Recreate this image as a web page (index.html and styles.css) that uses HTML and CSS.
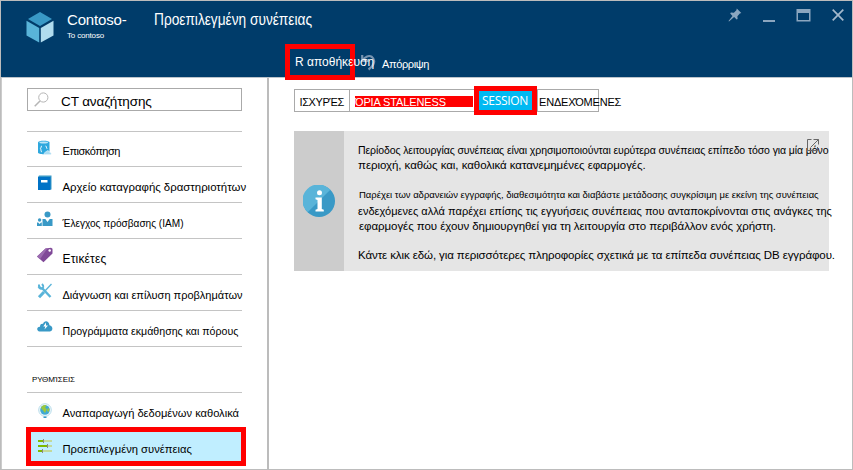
FILE: index.html
```html
<!DOCTYPE html>
<html lang="el">
<head>
<meta charset="utf-8">
<title>Προεπιλεγμένη συνέπειας</title>
<link rel="stylesheet" href="styles.css">
</head>
<body>
<div class="window">
  <header class="header">
    <div class="titlebar">
      <svg class="logo" width="28" height="31" viewBox="0 0 28 31">
        <path fill="#3999c6" d="M14 0 26 7 14 14 2 7z"/>
        <path fill="#59b4d9" d="M.5 8.8 13.2 16v14.5L.5 23.4z"/>
        <path fill="#b0dcee" d="M27.5 8.8 14.8 16v14.5l12.7-7.1z"/>
      </svg>
      <div class="brand">
        <div class="brand-name">Contoso-</div>
        <div class="brand-sub">Το contoso</div>
      </div>
      <h1 class="title">Προεπιλεγμένη συνέπειας</h1>
      <div class="controls">
        <svg width="14" height="14" viewBox="0 0 14 14" fill="#8ba6bf"><path d="M8.8.6 13.3 5l-1.5.5-2.4 2.7.2 2.7-1 .7-2.5-2.5L1 13.4.5 13l4-5L2.2 5.500l.7-.9 3 .2 2.500-2.500z"/></svg>
        <svg width="12" height="14" viewBox="0 0 12 14"><path fill="#8ba6bf" d="M0 12h12v2H0z"/></svg>
        <svg width="15" height="14" viewBox="0 0 15 14"><path fill="#8ba6bf" fill-rule="evenodd" d="M.5 1h14v12.500H.5zM2 5h11v7H2z"/></svg>
        <svg width="12" height="14" viewBox="0 0 12 14"><path stroke="#a5b9cc" stroke-width="1.700" d="M.7 1.700 11.300 12.300M11.300 1.700.7 12.300"/></svg>
      </div>
    </div>
    <div class="toolbar">
      <div class="save">R αποθήκευση</div>
      <svg class="undo" width="15" height="17" viewBox="0 0 15 17" fill="none" stroke="#7895b1" stroke-width="2.200"><path d="M1.200 1v6h6.300M1.500 6.500C4 2.500 8 .8 11 3c3.800 3 2.500 8-3.500 12.500"/></svg>
      <div class="discard">Απόρριψη</div>
    </div>
  </header>
  <div class="body">
    <nav class="sidebar">
      <div class="search">
        <svg width="15" height="15" viewBox="0 0 15 15" fill="none" stroke="#b5b5b5"><circle cx="9.300" cy="5.500" r="4.600"/><path stroke-width="1.500" d="M6 9 .7 14.300"/></svg>
        <span>CT αναζήτησης</span>
      </div>
      <ul class="menu">
        <li>
          <svg width="16" height="16" viewBox="0 0 16 16"><path fill="#2ea8de" d="M1 2.500C1 .3 12.500.3 12.500 2.500v10c0 2.300-11.500 2.300-11.500 0z"/><ellipse cx="6.700" cy="2.600" rx="4.300" ry="1" fill="#bfe6f7"/><path d="M5 6c-1.500 0-.5 2.300-1.700 2.800C4.500 9.300 3.500 12 5 12M8.500 6c1.500 0 .5 2.300 1.700 2.800" fill="none" stroke="#fff"/><path fill="#a9dbf2" stroke="#fff" stroke-width=".6" d="M7.500 14.700c-1-2 1-2.700 1.500-2.500.5-2 3-2 3.500 0 2-.2 2.500 2.500.8 2.500z"/></svg>
          <span class="overview">Επισκόπηση</span>
        </li>
        <li>
          <svg width="16" height="16" viewBox="0 0 16 16"><path fill="#3999c6" d="M2 .5h12.500v14H13V2H1z"/><path fill="#0072c6" d="M1 2h12.500v13H1z"/><path fill="#fff" d="M4 5h6.500v2.500H4z"/></svg>
          <span class="log">Αρχείο καταγραφής δραστηριοτήτων</span>
        </li>
        <li>
          <svg width="16" height="16" viewBox="0 0 16 16" fill="#3999c6"><circle cx="10.500" cy="3.500" r="3"/><path d="M5.500 15V8h2.800l2.200 3 2.200-3h2.800v7z"/><circle cx="2.600" cy="9" r="1.700"/><path d="M0 15v-3.500h1.200l1.400 1.500L4 11.500h.8V15z"/></svg>
          <span class="iam">Έλεγχος πρόσβασης (IAM)</span>
        </li>
        <li>
          <svg width="16" height="16" viewBox="0 0 16 16"><path fill="#804998" d="M8.500 1.500 14 .7l1.500 1v4.800L6.500 15.300 0 9.500z"/><path fill="#9b6bb0" d="m8.500 1.500 2-.3L3 12.200 0 9.500z"/><circle cx="12.700" cy="3.500" r="1.200" fill="#fff"/></svg>
          <span class="tags">Ετικέτες</span>
        </li>
        <li>
          <svg width="16" height="16" viewBox="0 0 16 16" fill="none" stroke="#59b4d9"><path stroke-width="2.400" d="m5 5 8.500 9"/><path stroke-width="2" d="M2 1.500c-.5 4 3.500 4.500 4.200 2.500C6.500 2.500 5.500 1.500 5 1M1.500 3.500C3 6.500 5 6 6 5"/><path stroke-width="1.300" d="M14.500 1 7 9"/><path stroke-width="3" d="m7 9-5 5.300"/></svg>
          <span class="diagnose">Διάγνωση και επίλυση προβλημάτων</span>
        </li>
        <li>
          <svg width="16" height="16" viewBox="0 0 16 16"><path fill="#3999c6" d="M2.500 12.500C-.8 12-.5 7.500 3 7.700 3 4.500 5.500 4.500 6 5c1-4 6-3.500 6.500 1.200 3.500.3 4 5.800.5 6.300z"/><path fill="#fff" d="m9 3.500-2.700 4h2L7.500 10.500 11 6.500H9z"/></svg>
          <span class="guides">Προγράμματα εκμάθησης και πόρους</span>
        </li>
      </ul>
      <div class="section">ΡΥΘΜΊΣΕΙΣ</div>
      <ul class="menu settings">
        <li>
          <svg width="16" height="16" viewBox="0 0 16 16"><circle cx="8" cy="7" r="6.300" fill="#f4fafc" stroke="#b7dcea"/><circle cx="8" cy="7" r="4.800" fill="#3fa9d5"/><path fill="#9bc83f" d="M4 5c1-3 4-3.300 5.500-2.500L8 5l2 1-2 4-2-2.500zM11 5l1.500 1-1 3-1.500-1z"/><path fill="#3999c6" d="M6.500 13.500h3V15h-3z"/></svg>
          <span class="replicate">Αναπαραγωγή δεδομένων καθολικά</span>
        </li>
        <li class="active">
          <svg width="16" height="16" viewBox="0 0 16 16"><path fill="#c3d99b" d="M1 2h14v2H1zM1 7h14v2H1zM1 12h14v2H1z"/><path fill="#7fba00" d="M1 2h5v2H1zM1 7h9v2H1zM1 12h4v2H1z"/><path fill="#888" d="M6 1h1v4H6zM10 6h1v4h-1zM5 11h1v4H5z"/></svg>
          <span class="consistency">Προεπιλεγμένη συνέπειας</span>
        </li>
      </ul>
    </nav>
    <main class="main">
      <div class="tabs">
        <div class="tab strong">ΙΣΧΥΡΈΣ</div>
        <div class="tab bounded"><span>ΌΡΙΑ STALENESS</span></div>
        <div class="tab session">SESSION</div>
        <div class="tab eventual">ΕΝΔΕΧΌΜΕΝΕΣ</div>
      </div>
      <section class="banner">
        <div class="banner-icon">
          <svg width="32" height="32" viewBox="0 0 32 32"><circle cx="16" cy="16" r="16" fill="#3999c6"/><path fill="#59b4d9" d="M27.300 4.700A16 16 0 1 0 4.700 27.300z"/><circle cx="16.500" cy="7.700" r="2.500" fill="#fff"/><path fill="#fff" d="M12.500 12.500h6.300v11.500l2 .8V26.500h-8.300v-1.700l2-.8v-9l-2-.8z"/></svg>
        </div>
        <div class="banner-text">
          <p class="l1">Περίοδος λειτουργίας συνέπειας είναι χρησιμοποιούνται ευρύτερα συνέπειας επίπεδο τόσο για μία μόνο</p>
          <p class="l2">περιοχή, καθώς και, καθολικά κατανεμημένες εφαρμογές.</p>
          <p class="l3">Παρέχει των αδρανειών εγγραφής, διαθεσιμότητα και διαβάστε μετάδοσης συγκρίσιμη με εκείνη της συνέπειας</p>
          <p class="l4">ενδεχόμενες αλλά παρέχει επίσης τις εγγυήσεις συνέπειας που ανταποκρίνονται στις ανάγκες της</p>
          <p class="l5">εφαρμογές που έχουν δημιουργηθεί για τη λειτουργία στο περιβάλλον ενός χρήστη.</p>
          <p class="l6">Κάντε κλικ εδώ, για περισσότερες πληροφορίες σχετικά με τα επίπεδα συνέπειας DB εγγράφου.</p>
        </div>
        <svg class="external" width="12" height="12" viewBox="0 0 12 12" fill="none" stroke="#666"><path d="M4.500.5h-4v11h10V8M6.500.5h5v5M11.500.5l-8 8"/></svg>
      </section>
    </main>
  </div>
</div>
</body>
</html>
```
FILE: styles.css
```css
* { box-sizing: border-box; }
body {
  margin: 0;
  overflow: hidden;
  font-family: "Liberation Sans", sans-serif;
  color: #000;
  white-space: nowrap;
}
svg { display: block; flex: none; }
.window {
  display: flex;
  flex-direction: column;
  width: 853px;
  height: 470px;
  border: 1px solid #bcbcbc;
  background: #fff;
}

.header {
  position: relative;
  z-index: 1;
  height: 77px;
  flex: none;
  background: #003c6a;
  border-bottom: 1px solid #bcc4cb;
  color: #fff;
}
.titlebar { display: flex; height: 43px; padding: 0 8px 0 25px; }
.logo { margin-top: 11px; }
.brand { width: 87px; margin-left: 13px; padding-top: 10px; }
.brand-name { font-size: 15px; line-height: 18px; letter-spacing: -0.17px; }
.brand-sub { margin-top: 2px; font-size: 8px; line-height: 10px; letter-spacing: -0.17px; }
.title {
  margin: 9px 0 0;
  font-size: 16px;
  font-weight: 400;
  line-height: 20px;
  transform: scaleX(0.856);
  transform-origin: left;
}
.controls { display: flex; margin: 7px 0 0 auto; }
.controls svg:nth-child(2) { margin-left: 21px; }
.controls svg:nth-child(3) { margin-left: 21px; }
.controls svg:nth-child(4) { margin-left: 21px; }
.toolbar { display: flex; height: 36px; padding-left: 284px; }
.save {
  position: relative;
  z-index: 1;
  width: 70px;
  height: 36px;
  border: 5px solid #f00;
  padding-left: 5px;
  font-size: 12px;
  line-height: 27px;
}
.undo { margin: 10px 0 0 6px; }
.discard { margin-left: 6px; font-size: 11px; line-height: 40px; letter-spacing: -0.37px; }

.body { display: flex; flex: 1; min-height: 0; }
.sidebar {
  width: 268px;
  padding: 10px 25px 0;
  border-left: 1px solid #ccc;
  border-right: 2px solid #bcbcbc;
  flex: none;
}
.search {
  display: flex;
  width: 215px;
  height: 23px;
  border: 1px solid #aaa;
  padding: 3px 0 0 6px;
}
.search span { margin-left: 12px; font-size: 13.500px; line-height: 19px; letter-spacing: -0.116px; }
.menu {
  width: 215px;
  margin: 20px 0 0;
  padding: 0;
  list-style: none;
  border-top: 1px solid #c4c4c4;
}
.menu li {
  display: flex;
  height: 36px;
  padding: 8px 0 0 10px;
  border-bottom: 1px solid #c4c4c4;
}
.menu li:first-child { height: 35px; }
.menu span { margin-left: 9.500px; padding-top: 5px; line-height: 15px; }
.menu .overview { padding-top: 4px; font-size: 11px; letter-spacing: -0.46px; }
.log { font-size: 11.400px; }
.iam { font-size: 10.080px; }
.tags { font-size: 12px; letter-spacing: 0.17px; }
.diagnose { font-size: 11px; }
.guides { font-size: 10.620px; }
.section {
  height: 45px;
  padding: 28px 0 0 5px;
  font-size: 8px;
  line-height: 10px;
  letter-spacing: -0.07px;
}
.settings { margin-top: 0; }
.settings li { border: 0; }
.settings li:first-child { height: 34px; padding-top: 10px; }
.replicate { font-size: 11.110px; }
.menu .consistency { padding-top: 4px; font-size: 11.230px; }
.menu .active {
  width: 220px;
  height: 39px;
  margin-left: -1px;
  border: 5px solid #f00;
  background: #c0eeff;
  padding: 6px 0 0 6px;
}
.settings li:first-child span { padding-top: 3px; }

.main { flex: 1; min-width: 0; padding: 11px 0 0 25px; }
.tabs { display: flex; width: 305px; height: 23px; border: 1px solid #aaa; }
.tab { line-height: 24px; font-size: 11px; }
.strong { width: 55px; padding-left: 4.500px; border-right: 1px solid #aaa; letter-spacing: -0.4px; flex: none; }
.bounded { width: 124px; padding: 6px 0 0 5px; flex: none; }
.bounded span {
  display: block;
  width: 118px;
  height: 11px;
  background: #f00;
  color: #fff;
  line-height: 13px;
  letter-spacing: -0.13px;
}
.session {
  width: 63px;
  height: 29px;
  margin-top: -4px;
  border: 5px solid #f00;
  padding-left: 3px;
  background: #00b9f2;
  color: #fff;
  font-family: "Open Sans", sans-serif;
  font-size: 12px;
  line-height: 19px;
  letter-spacing: -0.3px;
  flex: none;
}
.eventual { border-left: 1px solid #aaa; padding-left: 1px; letter-spacing: -0.2px; }
.banner {
  position: relative;
  display: flex;
  width: 535px;
  height: 140px;
  margin-top: 19px;
  background: #e5e5e5;
}
.banner-icon { width: 50px; padding: 54px 0 0 9px; background: #ccc; flex: none; }
.banner-text { padding: 12px 0 0 14px; }
.banner-text p { margin: 0; line-height: 15px; }
.l1 { font-size: 10.500px; letter-spacing: -0.1px; }
.l2 { font-size: 11.500px; letter-spacing: -0.05px; }
.banner-text .l3 { margin: 14px 0 0 1px; font-size: 9.500px; letter-spacing: -0.02px; }
.banner-text .l4 { margin-top: 2px; font-size: 11px; letter-spacing: 0.025px; }
.banner-text .l5 { margin-left: 1px; font-size: 11.500px; letter-spacing: -0.065px; }
.banner-text .l6 { margin-top: 14px; font-size: 11.500px; letter-spacing: -0.1px; }
.external { position: absolute; left: 513px; top: 8px; }
```
